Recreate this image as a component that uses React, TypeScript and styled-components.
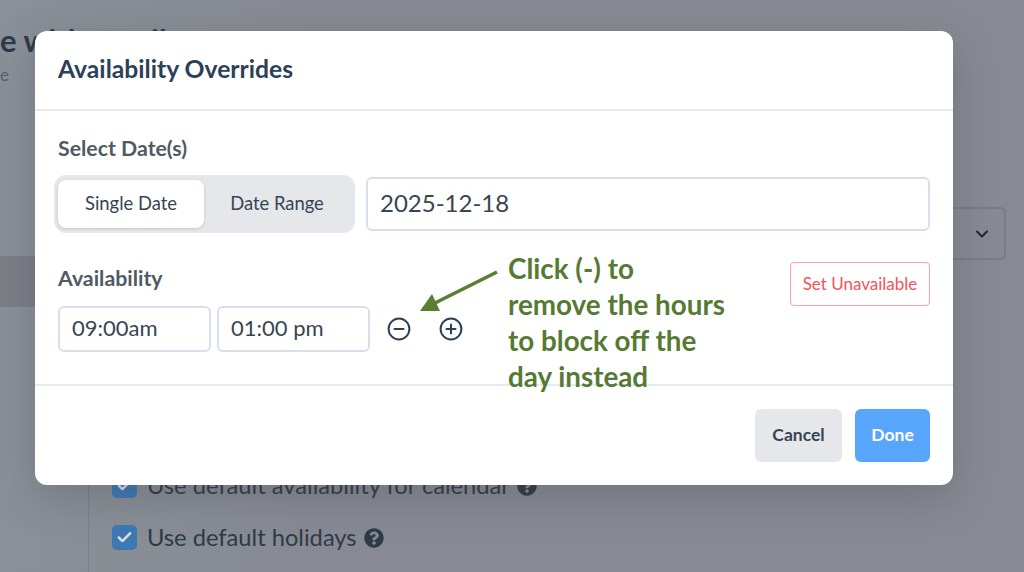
import styled, { createGlobalStyle } from "styled-components";
import { Check, ChevronDown } from "lucide-react";
import { FaQuestionCircle } from "react-icons/fa";

const GlobalStyle = createGlobalStyle`
  html, body {
    margin: 0;
    padding: 0;
    background: #878a92;
    font-family: "Lato", "Noto Sans", sans-serif;
  }
`;

const Page = styled.div`
  position: relative;
  width: 1024px;
  height: 572px;
  overflow: hidden;
  background: #878a92;
`;

const Backdrop = styled.div`
  display: flex;
  flex-direction: column;
  height: 100%;
  background: linear-gradient(90deg, #8a9097 0, #878a92 30%);
`;

const PageHead = styled.div`
  height: 164px;
  padding-top: 21px;
  box-sizing: border-box;
  white-space: nowrap;
`;

const PageTitle = styled.h1`
  margin: 0;
  font-size: 31px;
  line-height: 38px;
  font-weight: 700;
  color: #2b3a4a;
`;

const PageSub = styled.div`
  margin: 6px 0 0;
  font-size: 17px;
  line-height: 20px;
  color: #5b6068;
`;

const Columns = styled.div`
  flex: 1;
  display: flex;
`;

const Sidebar = styled.div`
  width: 88px;
  flex: none;
  padding-top: 92px;
  border-right: 1px solid #7c8088;
`;

const NavActive = styled.div`
  height: 51px;
  background: #7b7e86;
`;

const Main = styled.div`
  flex: 1;
  display: flex;
  flex-direction: column;
  padding: 43px 18px 0 23px;
`;

const SelectBox = styled.div`
  align-self: flex-end;
  display: flex;
  align-items: center;
  justify-content: flex-end;
  width: 300px;
  height: 53px;
  padding-right: 12px;
  box-sizing: border-box;
  border: 2px solid #767d86;
  border-radius: 6px;
  color: #22272e;
`;

const Checks = styled.div`
  display: flex;
  flex-direction: column;
  gap: 27px;
  margin-top: 213px;
`;

const CheckRow = styled.div`
  display: flex;
  align-items: center;
  gap: 10px;
  font-size: 23.7px;
  line-height: 25px;
  color: #2f3a47;
`;

const CheckBox = styled.span`
  display: flex;
  align-items: center;
  justify-content: center;
  width: 25px;
  height: 25px;
  border-radius: 5px;
  background: #3d78b3;
  color: #d5dde6;
`;

const HelpIcon = styled(FaQuestionCircle)`
  width: 20px;
  height: 20px;
  margin-left: -3px;
  color: #2f3a47;
`;

const Modal = styled.div`
  position: absolute;
  left: 35px;
  top: 31px;
  width: 918px;
  height: 454px;
  display: flex;
  flex-direction: column;
  border-radius: 12px;
  background: #fff;
  box-shadow: 0 12px 40px rgba(60, 66, 74, 0.28);
`;

const ModalHead = styled.div`
  height: 80px;
  flex: none;
  display: flex;
  align-items: center;
  padding: 0 23px 3px;
  box-sizing: border-box;
  border-bottom: 2px solid #e7eaee;
`;

const ModalTitle = styled.h2`
  margin: 0;
  font-size: 24.7px;
  font-weight: 700;
  color: #2c4159;
`;

const ModalBody = styled.div`
  flex: 1;
  padding: 25px 23px 0;
  display: flex;
  flex-direction: column;
  border-bottom: 2px solid #e7eaee;
`;

const FieldLabel = styled.div`
  font-size: 21.3px;
  line-height: 24px;
  font-weight: 700;
  color: #4f5a65;
`;

const DateRow = styled.div`
  display: flex;
  align-items: center;
  gap: 11px;
  margin: 15px 0 0 -4px;
`;

const Toggle = styled.div`
  display: flex;
  width: 301px;
  height: 58px;
  padding: 5px 4px;
  box-sizing: border-box;
  border-radius: 12px;
  background: #e5e7eb;
`;

const ToggleTab = styled.div<{ $active?: boolean }>`
  width: 146px;
  padding-bottom: 2px;
  box-sizing: border-box;
  display: flex;
  align-items: center;
  justify-content: center;
  border-radius: 8px;
  font-size: 18.4px;
  color: #374553;
  background: ${(p) => (p.$active ? "#fff" : "transparent")};
  box-shadow: ${(p) => (p.$active ? "0 1px 3px rgba(80, 90, 100, 0.25)" : "none")};
`;

const TextBox = styled.div<{ $grow?: boolean; $size?: number }>`
  display: flex;
  align-items: center;
  flex: ${(p) => (p.$grow ? "1" : "none")};
  width: ${(p) => (p.$grow ? "auto" : "153px")};
  height: ${(p) => (p.$grow ? "54px" : "46px")};
  padding: 0 0 3px 12px;
  box-sizing: border-box;
  border: 2px solid #d6dfeb;
  border-radius: 6px;
  font-size: ${(p) => p.$size ?? 22}px;
  color: #3a4552;
`;

const AvailabilityRow = styled.div`
  display: flex;
  justify-content: space-between;
  margin-top: 29px;
`;

const AvailabilityCol = styled.div`
  padding-top: 4px;
`;

const HoursRow = styled.div`
  display: flex;
  align-items: center;
  gap: 6px;
  margin-top: 16px;
`;

const RoundIcons = styled.div`
  display: flex;
  gap: 28px;
  margin-left: 11px;
  color: #2c4159;
`;

const DangerButton = styled.div`
  width: 140px;
  height: 44px;
  display: flex;
  align-items: center;
  justify-content: center;
  padding-bottom: 2px;
  box-sizing: border-box;
  border: 1.5px solid #fba3a7;
  border-radius: 4px;
  font-size: 17px;
  color: #f2545b;
`;

const ModalFoot = styled.div`
  height: 99px;
  flex: none;
  display: flex;
  align-items: center;
  justify-content: flex-end;
  gap: 13px;
  padding: 0 23px 0;
  box-sizing: border-box;
`;

const FootButton = styled.div<{ $primary?: boolean }>`
  width: ${(p) => (p.$primary ? "75px" : "87px")};
  height: 53px;
  display: flex;
  align-items: center;
  justify-content: center;
  padding-bottom: 2px;
  box-sizing: border-box;
  border-radius: 6px;
  font-size: 17.5px;
  font-weight: 700;
  color: ${(p) => (p.$primary ? "#fff" : "#374553")};
  background: ${(p) => (p.$primary ? "#58a6fb" : "#e5e7eb")};
`;

const Callout = styled.div`
  position: absolute;
  left: 508px;
  top: 251px;
  width: 260px;
  font-size: 27.8px;
  line-height: 36px;
  font-weight: 700;
  color: #567a34;
`;

const Arrow = styled.svg`
  position: absolute;
  left: 415px;
  top: 268px;
`;

const CircleMinus = () => (
  <svg width="24" height="24" viewBox="0 0 24 24" fill="none" stroke="currentColor" strokeWidth="2" strokeLinecap="round">
    <circle cx="12" cy="12" r="10.4" />
    <path d="M7.5 12h9" />
  </svg>
);

const CirclePlus = () => (
  <svg width="24" height="24" viewBox="0 0 24 24" fill="none" stroke="currentColor" strokeWidth="2" strokeLinecap="round">
    <circle cx="12" cy="12" r="10.4" />
    <path d="M7.5 12h9M12 7.5v9" />
  </svg>
);

export default function App() {
  return (
    <Page>
      <GlobalStyle />
      <Backdrop>
        <PageHead>
          <PageTitle>e with email</PageTitle>
          <PageSub>e</PageSub>
        </PageHead>
        <Columns>
          <Sidebar>
            <NavActive />
          </Sidebar>
          <Main>
            <SelectBox>
              <ChevronDown size={20} strokeWidth={2.4} />
            </SelectBox>
            <Checks>
              <CheckRow>
                <CheckBox>
                  <Check size={17} strokeWidth={3.5} />
                </CheckBox>
                Use default availability for calendar
                <HelpIcon />
              </CheckRow>
              <CheckRow>
                <CheckBox>
                  <Check size={17} strokeWidth={3.5} />
                </CheckBox>
                Use default holidays
                <HelpIcon />
              </CheckRow>
            </Checks>
          </Main>
        </Columns>
      </Backdrop>
      <Modal>
        <ModalHead>
          <ModalTitle>Availability Overrides</ModalTitle>
        </ModalHead>
        <ModalBody>
          <FieldLabel>Select Date(s)</FieldLabel>
          <DateRow>
            <Toggle>
              <ToggleTab $active>Single Date</ToggleTab>
              <ToggleTab>Date Range</ToggleTab>
            </Toggle>
            <TextBox $grow $size={24}>2025-12-18</TextBox>
          </DateRow>
          <AvailabilityRow>
            <AvailabilityCol>
              <FieldLabel>Availability</FieldLabel>
              <HoursRow>
                <TextBox>09:00am</TextBox>
                <TextBox>01:00 pm</TextBox>
                <RoundIcons>
                  <CircleMinus />
                  <CirclePlus />
                </RoundIcons>
              </HoursRow>
            </AvailabilityCol>
            <DangerButton>Set Unavailable</DangerButton>
          </AvailabilityRow>
        </ModalBody>
        <ModalFoot>
          <FootButton>Cancel</FootButton>
          <FootButton $primary>Done</FootButton>
        </ModalFoot>
      </Modal>
      <Arrow width="84" height="46" viewBox="0 0 84 46">
        <path d="M82 4 L18 36" stroke="#5a7f33" strokeWidth="3.5" fill="none" />
        <path d="M5 43 L25 43 L17 26 Z" fill="#5a7f33" />
      </Arrow>
      <Callout>
        Click (-) to
        <br />
        remove the hours
        <br />
        to block off the
        <br />
        day instead
      </Callout>
    </Page>
  );
}
